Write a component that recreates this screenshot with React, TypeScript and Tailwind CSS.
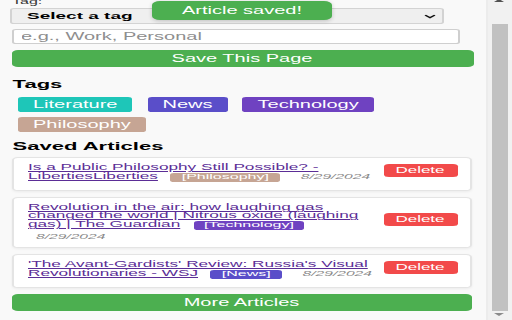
import React from 'react';

const tagColors: Record<string, string> = {
  Literature: 'bg-[#1ec6b8]',
  News: 'bg-[#5a4ec9]',
  Technology: 'bg-[#6f42c1]',
  Philosophy: 'bg-[#c6a594]',
};

const tags = ['Literature', 'News', 'Technology', 'Philosophy'];

const articles = [
  { id: 1, title: 'Is a Public Philosophy Still Possible? - LibertiesLiberties', tag: 'Philosophy', date: '8/29/2024' },
  {
    id: 2,
    title: 'Revolution in the air: how laughing gas changed the world | Nitrous oxide (laughing gas) | The Guardian',
    tag: 'Technology',
    date: '8/29/2024',
  },
  { id: 3, title: "'The Avant-Gardists' Review: Russia's Visual Revolutionaries - WSJ", tag: 'News', date: '8/29/2024' },
];

const Scrollbar = () => (
  <div className="w-[13.5px] h-[320px] bg-[#f1f1f1] border-l border-[#ececec] flex flex-col items-center">
    <svg width="5" height="3" viewBox="0 0 5 3" className="-mt-[1px]">
      <path d="M0 3 L2.5 0 L5 3 Z" fill="#505050" />
    </svg>
    <div className="mt-[22px] w-[8px] h-[287px] bg-[#c1c1c1]" />
    <svg width="5" height="3" viewBox="0 0 5 3" className="mt-[2px]">
      <path d="M0 0 L2.5 3 L5 0 Z" fill="#8a8a8a" />
    </svg>
  </div>
);

export default function App() {
  return (
    <div className="w-[512px] h-[320px] overflow-hidden bg-[#f9f9f9]">
      <div className="w-[256px] h-[320px] flex scale-x-200 origin-top-left font-['Liberation_Sans',Arial,sans-serif] text-black">
        {/* main popup content, page scrolled down a little */}
        <div className="relative w-[242.5px] h-[320px] pl-[5.5px]">
          <div className="-mt-[2px] h-[8px] pl-[0.5px] text-[8px] leading-[8px] text-[#333]">Tag:</div>

          <div className="-ml-[0.5px] mt-[2px] w-[216.5px] h-[16px] bg-[#efefef] border border-[#d3d3d3] rounded-[2px] flex items-center justify-between pl-[7.5px] pr-[2.5px]">
            <span className="text-[9.5px] font-bold">Select a tag</span>
            <svg width="6" height="5" viewBox="0 0 6 5">
              <path d="M0.6 1.2 L3 3.6 L5.4 1.2" fill="none" stroke="#111" strokeWidth="1.1" />
            </svg>
          </div>

          <input
            type="text"
            placeholder="e.g., Work, Personal"
            className="block mt-[5px] w-[224.5px] h-[15px] bg-white border border-[#cfcfcf] rounded-[2px] pl-[4px] text-[10px] outline-none placeholder:text-[#8e8e8e]"
          />

          <button className="block mt-[6px] w-[231px] h-[17px] bg-[#4caf50] text-white text-[10px] rounded-[3px]">
            Save This Page
          </button>

          <h3 className="mt-[11px] text-[11px] leading-[12px] font-bold pl-[0.8px]">Tags</h3>

          <div className="mt-[7px] pl-[3.5px] flex flex-wrap gap-x-[7.5px] gap-y-[5px] w-[231px]">
            {tags.map(t => (
              <span
                key={t}
                className={`inline-flex items-center h-[15px] px-[7.5px] rounded-[2px] text-white text-[10px] ${tagColors[t]}`}
              >
                {t}
              </span>
            ))}
          </div>

          <h3 className="mt-[7.5px] text-[11px] leading-[12px] font-bold pl-[0.8px]">Saved Articles</h3>

          <div className="mt-[5.5px] w-[230.5px]">
            {articles.map(a => (
              <div
                key={a.id}
                className="flex items-center bg-white border border-[#e4e4e4] rounded-[3px] shadow-[0_1px_2px_rgba(0,0,0,0.06)] pl-[7.5px] pr-[6.5px] pt-[5.2px] pb-[6.3px] mb-[6px]"
              >
                <div className="flex-1 min-w-0 text-[8.6px] leading-[8px]">
                  <a href="#" className="text-[#5b2d96] underline">
                    {a.title}
                  </a>{' '}
                  <span
                    className={`inline-block mx-[4px] my-[2px] px-[5.5px] rounded-[2px] text-white text-[8px] leading-[8.5px] ${tagColors[a.tag]}`}
                  >
                    [{a.tag}]
                  </span>{' '}
                  <span className="ml-[4px] italic text-[#8a8a8a] text-[7.8px]">{a.date}</span>
                </div>
                <button className="shrink-0 w-[37px] h-[13px] mb-[5.4px] bg-[#f24a4a] text-white text-[8.5px] rounded-[2.5px] flex items-center justify-center">
                  Delete
                </button>
              </div>
            ))}
          </div>

          <button className="block w-[230.5px] h-[17px] bg-[#4caf50] text-white text-[10px] rounded-[3px]">
            More Articles
          </button>

          {/* toast */}
          <div className="absolute top-[1px] left-[76px] w-[90px] h-[19px] bg-[#4caf50] rounded-[4px] shadow-[0_1px_3px_rgba(0,0,0,0.2)] flex items-center justify-center text-white text-[10px]">
            Article saved!
          </div>
        </div>

        <Scrollbar />
      </div>
    </div>
  );
}
